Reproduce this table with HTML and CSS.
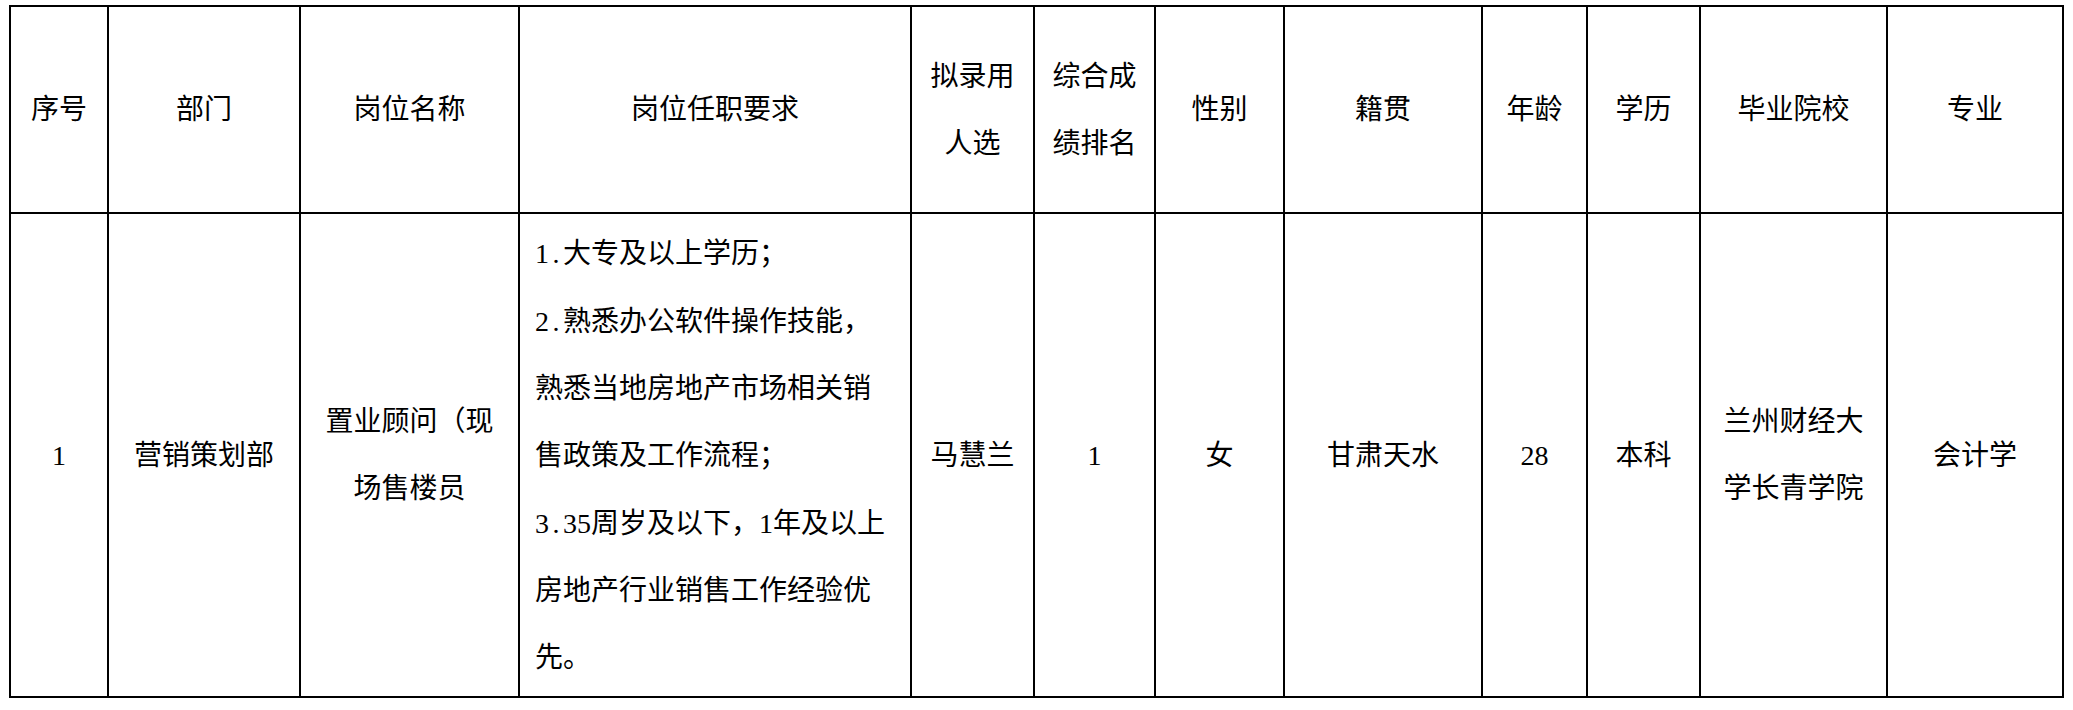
FILE: index.html
```html
<!DOCTYPE html>
<html lang="zh-CN">
<head>
<meta charset="utf-8">
<title>拟录用人选公示</title>
<link rel="stylesheet" href="styles.css">
</head>
<body>
<table class="grid">
  <colgroup>
    <col class="c-no">
    <col class="c-dept">
    <col class="c-post">
    <col class="c-req">
    <col class="c-name">
    <col class="c-rank">
    <col class="c-sex">
    <col class="c-home">
    <col class="c-age">
    <col class="c-edu">
    <col class="c-school">
    <col class="c-major">
  </colgroup>
  <thead>
    <tr class="head-row">
      <th>序号</th>
      <th>部门</th>
      <th>岗位名称</th>
      <th>岗位任职要求</th>
      <th>拟录用<br>人选</th>
      <th>综合成<br>绩排名</th>
      <th>性别</th>
      <th>籍贯</th>
      <th>年龄</th>
      <th>学历</th>
      <th>毕业院校</th>
      <th>专业</th>
    </tr>
  </thead>
  <tbody>
    <tr class="body-row">
      <td>1</td>
      <td>营销策划部</td>
      <td>置业顾问（现<br>场售楼员</td>
      <td class="req"><span class="asc">1.</span>大专及以上学历；<br><span class="asc">2.</span>熟悉办公软件操作技能，<br>熟悉当地房地产市场相关销<br>售政策及工作流程；<br><span class="asc">3.</span>35周岁及以下，1年及以上<br>房地产行业销售工作经验优<br>先。</td>
      <td>马慧兰</td>
      <td>1</td>
      <td>女</td>
      <td>甘肃天水</td>
      <td>28</td>
      <td>本科</td>
      <td>兰州财经大<br>学长青学院</td>
      <td>会计学</td>
    </tr>
  </tbody>
</table>
</body>
</html>
```

FILE: styles.css
```css
html, body {
  margin: 0;
  padding: 0;
  background: #ffffff;
}

body {
  padding: 5px 0 0 9px;
  font-family: "Liberation Serif", "Noto Sans CJK SC", serif;
  color: #000000;
}

.grid {
  border-collapse: collapse;
  table-layout: fixed;
  width: 2053px;
}

.grid th,
.grid td {
  border: 2px solid #000000;
  padding: 0;
  text-align: center;
  vertical-align: middle;
  font-size: 28px;
  line-height: 67px;
  font-weight: normal;
}

.c-no { width: 98px; }
.c-dept { width: 192px; }
.c-post { width: 219px; }
.c-req { width: 392px; }
.c-name { width: 123px; }
.c-rank { width: 121px; }
.c-sex { width: 129px; }
.c-home { width: 198px; }
.c-age { width: 105px; }
.c-edu { width: 113px; }
.c-school { width: 187px; }
.c-major { width: 176px; }

.head-row {
  height: 207px;
}

.body-row {
  height: 484px;
}

.grid td.req {
  text-align: left;
  padding: 4px 10px 2px 15px;
  line-height: 67.3px;
}

.asc {
  letter-spacing: 3.5px;
}
```
